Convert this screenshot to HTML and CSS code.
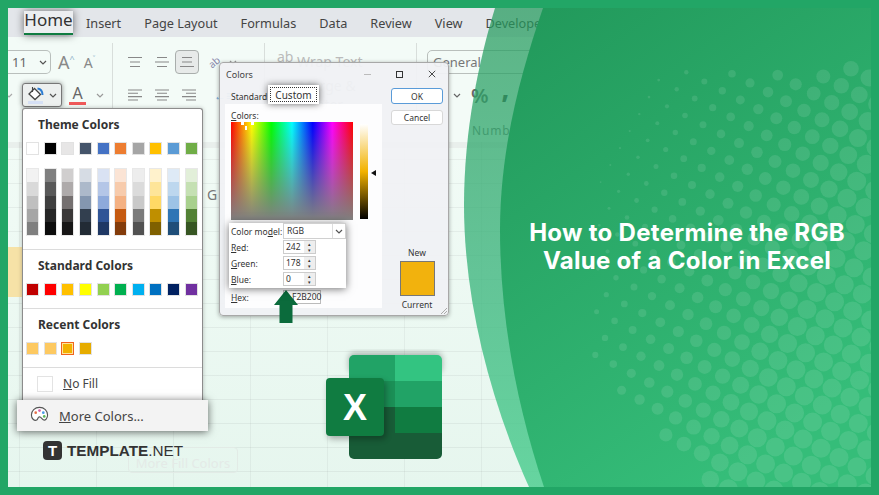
FILE: index.html
```html
<!DOCTYPE html>
<html lang="en">
<head>
<meta charset="UTF-8">
<title>How to Determine the RGB Value of a Color in Excel</title>
<link rel="stylesheet" href="styles.css">
</head>
<body>

<svg class="defs" width="0" height="0">
  <symbol id="lines-a" viewBox="0 0 16 12"><path d="M1 1.5h14M3 6h10M3 10.5h10"/></symbol>
  <symbol id="lines-b" viewBox="0 0 16 12"><path d="M3 1.5h10M1 6h14M3 10.5h10"/></symbol>
  <symbol id="lines-c" viewBox="0 0 16 12"><path d="M3 1.5h10M3 6h10M1 10.5h14"/></symbol>
  <symbol id="lines-l" viewBox="0 0 16 12"><path d="M1 1h14M1 4.3h10M1 7.6h14M1 11h10"/></symbol>
  <symbol id="lines-m" viewBox="0 0 16 12"><path d="M1 1h14M3 4.3h10M1 7.6h14M3 11h10"/></symbol>
  <symbol id="lines-r" viewBox="0 0 16 12"><path d="M1 1h14M5 4.3h10M1 7.6h14M5 11h10"/></symbol>
  <symbol id="chev" viewBox="0 0 8 5"><path d="M1 1l3 3 3-3"/></symbol>
</svg>

<div class="frame">

  <!-- excel window behind everything -->
  <div class="window">
    <nav class="tabs">
      <a class="tab tab-home">Home</a>
      <a class="tab">Insert</a>
      <a class="tab">Page Layout</a>
      <a class="tab">Formulas</a>
      <a class="tab">Data</a>
      <a class="tab">Review</a>
      <a class="tab">View</a>
      <a class="tab">Develope</a>
    </nav>

    <div class="ribbon">
      <div class="group group-font">
        <div class="row">
          <div class="size-box"><span>11</span><svg class="chev"><use href="#chev"/></svg></div>
          <span class="grow-a">A<sup>^</sup></span>
          <span class="shrink-a">A<sup>˅</sup></span>
        </div>
        <div class="row row-fill">
          <svg class="chev chev-stray"><use href="#chev"/></svg>
          <div class="fill-btn">
            <svg class="bucket" viewBox="0 0 18 18">
              <path d="M7.500 2.500L13.500 8.500L8 13.500L2 8z" fill="#fff" stroke="#444" stroke-width="1.300"/>
              <path d="M5.500 1v5" fill="none" stroke="#444" stroke-width="1.100"/>
              <path d="M10.500 2.500c3 .5 5 3 5 6.500" fill="none" stroke="#2b7cd3" stroke-width="2"/>
              <rect x="1" y="15" width="15" height="3" fill="#d6e0f5"/>
            </svg>
            <svg class="chev"><use href="#chev"/></svg>
          </div>
          <span class="font-a">A</span>
          <svg class="chev chev-pale"><use href="#chev"/></svg>
        </div>
      </div>

      <div class="group group-align">
        <div class="row">
          <svg class="lines"><use href="#lines-a"/></svg>
          <svg class="lines"><use href="#lines-b"/></svg>
          <span class="lines-on"><svg class="lines"><use href="#lines-c"/></svg></span>
          <span class="orient">ab</span>
          <svg class="chev chev-pale"><use href="#chev"/></svg>
        </div>
        <div class="row">
          <svg class="lines"><use href="#lines-l"/></svg>
          <svg class="lines"><use href="#lines-m"/></svg>
          <svg class="lines lines-last"><use href="#lines-r"/></svg>
          <span class="indent">←≡</span>
        </div>
        <span class="group-name">Alignment</span>
      </div>

      <div class="group group-wrap">
        <div class="row"><span class="wrap-text"><i>ab</i> Wrap Text</span></div>
        <div class="row"><span class="merge">Merge &amp; Center</span><svg class="chev chev-pale"><use href="#chev"/></svg></div>
      </div>

      <div class="group group-number">
        <div class="row"><div class="general">General</div></div>
        <div class="row">
          <svg class="chev chev-pale"><use href="#chev"/></svg>
          <span class="percent">%</span>
          <span class="comma">,</span>
        </div>
        <span class="group-name">Number</span>
      </div>
    </div>

    <div class="sheet">
      <span class="col-g">G</span>
      <span class="cell-yellow"></span>
    </div>
  </div>

  <button class="fill-more" type="button">More Fill Colors</button>

  <!-- right green panel -->
  <svg class="curve" viewBox="0 0 879 495">
    <defs>
      <linearGradient id="bandFill" x1="0" y1="0" x2="0" y2="1">
        <stop offset="0" stop-color="#22995b" stop-opacity=".72"/>
        <stop offset=".55" stop-color="#3cb57d" stop-opacity=".78"/>
        <stop offset="1" stop-color="#4fcf92" stop-opacity=".85"/>
      </linearGradient>
      <linearGradient id="mainFill" x1="0" y1="0" x2=".55" y2="1">
        <stop offset="0" stop-color="#21985a"/>
        <stop offset="1" stop-color="#35bd79"/>
      </linearGradient>
    </defs>
    <path fill="url(#bandFill)" d="M495 8C479 60 464 130 464 205C464 300 490 400 529 487H560V8Z"/>
    <path fill="url(#mainFill)" d="M543 8C520 75 500 150 500 230C500 320 518 410 544 487H879V8Z"/>
  </svg>
  <svg id="dots" class="dots" viewBox="0 0 879 495"></svg>

  <h1 class="headline">How to Determine the RGB<br>Value of a Color in Excel</h1>

  <!-- fill colour dropdown -->
  <div class="dropdown">
    <section class="dd-section dd-theme">
      <h3>Theme Colors</h3>
      <div class="swatches" id="theme"></div>
      <div class="shades" id="shades"></div>
    </section>
    <section class="dd-section">
      <h3>Standard Colors</h3>
      <div class="swatches" id="standard"></div>
    </section>
    <section class="dd-section">
      <h3>Recent Colors</h3>
      <div class="swatches" id="recent"></div>
    </section>
    <section class="dd-nofill">
      <span class="nofill-box"></span>
      <span><u>N</u>o Fill</span>
    </section>
  </div>

  <div class="more-colors">
    <svg class="palette" viewBox="0 0 20 20">
      <path d="M10 1.500C5 1.500 1.500 5 1.500 9.500c0 4 3 6 5 5.500 2-.5 1.500-3 3-3.500 2-.5 3 2 4.500 3 2 1.300 4.500-1.500 4.500-5C18.500 5 15 1.500 10 1.500z" fill="#fff" stroke="#555" stroke-width="1.200"/>
      <circle cx="6" cy="7" r="1.400" fill="#e8704a"/>
      <circle cx="10" cy="4.800" r="1.400" fill="#d95fa8"/>
      <circle cx="14" cy="7" r="1.400" fill="#4a9be8"/>
      <circle cx="15" cy="11" r="1.400" fill="#5cb85c"/>
    </svg>
    <span><u>M</u>ore Colors...</span>
  </div>

  <!-- colors dialog -->
  <div class="dialog">
    <div class="dlg-title">
      <span>Colors</span>
      <div class="dlg-buttons">
        <i class="btn-min"></i>
        <i class="btn-max"></i>
        <svg class="btn-close" viewBox="0 0 10 10"><path d="M1 1l8 8M9 1l-8 8"/></svg>
      </div>
    </div>
    <div class="dlg-body">
      <div class="dlg-main">
        <div class="dlg-tabs">
          <span class="dlg-tab">Standard</span>
          <span class="dlg-tab-on"><b>Custom</b></span>
        </div>
        <div class="dlg-panel">
          <div class="panel-label"><u>C</u>olors:</div>
          <div class="picker">
            <div class="spectrum"><i class="mark mark-t1"></i><i class="mark mark-t2"></i><i class="mark mark-c"></i></div>
            <div class="lum"></div>
            <div class="lum-arrow"></div>
          </div>
          <div class="form-box">
            <label>Color mo<u>d</u>el:</label>
            <div class="select"><span>RGB</span><em><svg class="chev"><use href="#chev"/></svg></em></div>
            <label><u>R</u>ed:</label>
            <div class="spin"><span>242</span><em>▴<br>▾</em></div>
            <label><u>G</u>reen:</label>
            <div class="spin"><span>178</span><em>▴<br>▾</em></div>
            <label><u>B</u>lue:</label>
            <div class="spin"><span>0</span><em>▴<br>▾</em></div>
          </div>
          <div class="hex-row">
            <label><u>H</u>ex:</label>
            <div class="hex-input">F2B200</div>
          </div>
        </div>
      </div>
      <div class="dlg-side">
        <button class="dlg-btn dlg-ok" type="button">OK</button>
        <button class="dlg-btn" type="button">Cancel</button>
        <span class="side-new">New</span>
        <div class="new-swatch"></div>
        <span class="side-current">Current</span>
      </div>
    </div>
    <svg class="grip" viewBox="0 0 8 8"><path d="M1 7l6-6M4 7l3-3"/></svg>
  </div>

  <svg class="arrow" viewBox="0 0 24 33"><path d="M12 0L24 15H18.500V33H5.500V15H0Z"/></svg>

  <!-- excel logo -->
  <svg class="excel" viewBox="0 0 116 104">
    <defs>
      <clipPath id="sheetClip"><rect x="23" y="0" width="93" height="104" rx="5"/></clipPath>
      <filter id="soft" x="-20%" y="-20%" width="140%" height="140%"><feGaussianBlur stdDeviation="3"/></filter>
    </defs>
    <rect x="23" y="-2" width="93" height="20" rx="5" fill="#000" opacity=".3" filter="url(#soft)"/>
    <g clip-path="url(#sheetClip)">
      <rect x="23" y="0" width="46" height="26" fill="#21a366"/>
      <rect x="69" y="0" width="47" height="26" fill="#33c481"/>
      <rect x="23" y="26" width="46" height="26" fill="#1b8f56"/>
      <rect x="69" y="26" width="47" height="26" fill="#21a366"/>
      <rect x="23" y="52" width="46" height="26" fill="#185c37"/>
      <rect x="69" y="52" width="47" height="26" fill="#107c41"/>
      <rect x="23" y="78" width="93" height="26" fill="#185c37"/>
    </g>
    <rect x="2" y="26" width="58" height="58" rx="4" fill="#000" opacity=".3" filter="url(#soft)"/>
    <rect x="0" y="23" width="58" height="58" rx="4" fill="#107c41"/>
    <text class="excel-x" x="29" y="65" text-anchor="middle">X</text>
  </svg>

  <!-- template.net logo -->
  <div class="brand">
    <span class="brand-mark">T</span>
    <span class="brand-name"><b>TEMPLATE</b>.NET</span>
  </div>
</div>

<script src="page.js"></script>
</body>
</html>
```

FILE: styles.css
```css
* {
  box-sizing: border-box;
}

body {
  margin: 0;
  font-family: "Noto Sans", "Open Sans", sans-serif;
  color: #333;
  overflow: hidden;
}

.defs {
  position: absolute;
}

.frame {
  position: relative;
  width: 879px;
  height: 495px;
  border: 8px solid #22a666;
  overflow: hidden;
  background: linear-gradient(#f6fdf9, #e6f6ee);
}

/* the svg canvases are laid over the whole picture, so undo the border */
.curve, .dots {
  position: absolute;
  left: -8px;
  top: -8px;
  width: 879px;
  height: 495px;
}

.window {
  display: flex;
  flex-direction: column;
  height: 100%;
}

/* tabs */
.tabs {
  display: flex;
  align-items: center;
  gap: 23px;
  height: 29px;
  padding-left: 78px;
  background: #e3e6ea;
  font-size: 12.7px;
  color: #444;
}

.tab-home {
  position: absolute;
  left: 16px;
  top: 3px;
  width: 49px;
  height: 24px;
  background: #eceef0;
  box-shadow: 0 0 8px rgba(0,0,0,.55);
  border-bottom: 2px solid #107c41;
  font-size: 17px;
  line-height: 18px;
  text-align: center;
  color: #333;
}

/* ribbon */
.ribbon {
  display: flex;
  height: 105px;
  background: #f3fbf7;
}

.group {
  position: relative;
  display: flex;
  flex-direction: column;
  gap: 9px;
  padding-top: 7px;
  border-right: 1px solid #d8dedb;
  margin: 6px 0 30px;
}

.group-font { width: 105px; }
.group-align { width: 152px; padding-left: 14px; }
.group-wrap { width: 152px; padding-left: 12px; }
.group-number { flex: 1; border-right: none; padding-left: 10px; }

.row {
  display: flex;
  align-items: center;
  height: 24px;
}

.chev {
  width: 8px;
  height: 5px;
  fill: none;
  stroke: #555;
  stroke-width: 1.2;
  flex: none;
}

.chev-pale {
  stroke: #999;
}

.size-box {
  display: flex;
  align-items: center;
  justify-content: space-between;
  width: 43px;
  height: 24px;
  padding: 0 3px 0 4px;
  border: 1px solid #b9bfbc;
  border-left: none;
  border-radius: 0 5px 5px 0;
  font-size: 13px;
  color: #666;
}

.grow-a, .shrink-a, .font-a {
  color: #888;
}

.grow-a { margin-left: 7px; font-size: 18px; }
.shrink-a { margin-left: 9px; font-size: 14px; }
.grow-a sup, .shrink-a sup { font-size: 9px; color: #8ab0c8; }

.row-fill {
  position: relative;
  padding-left: 14px;
}

.chev-stray {
  position: absolute;
  left: -3px;
  top: 10px;
  stroke: #aaa;
}

.fill-btn {
  display: flex;
  align-items: center;
  justify-content: space-between;
  width: 40px;
  height: 24px;
  padding: 0 4px;
  background: #edf0ef;
  border: 1px solid #777;
  border-radius: 3px;
  box-shadow: 0 0 5px rgba(0,0,0,.45);
}

.bucket {
  width: 18px;
  height: 18px;
}

.font-a {
  width: 17px;
  margin-left: 7px;
  border-bottom: 3px solid #ef5a5a;
  font-size: 16px;
  line-height: 17px;
  text-align: center;
  color: #666;
}

.row-fill .chev-pale {
  margin-left: 10px;
}

.lines {
  width: 16px;
  height: 12px;
  margin-right: 11px;
  fill: none;
  stroke: #888;
  stroke-width: 1.1;
}

.lines-last {
  margin-right: 17px;
}

.lines-on {
  display: flex;
  align-items: center;
  justify-content: center;
  width: 24px;
  height: 24px;
  margin-left: -6px;
  background: #e7eae9;
  border: 1px solid #a9aeac;
  border-radius: 4px;
}

.lines-on .lines {
  margin: 0;
}

.orient {
  margin-left: 9px;
  font-size: 10px;
  color: #88a;
  transform: rotate(-40deg);
}

.lines-on + .orient + .chev {
  margin-left: 9px;
}

.indent {
  font-size: 12px;
  color: #6aa6d8;
}

.group-name {
  position: absolute;
  left: 126px;
  top: 79px;
  font-size: 11px;
  color: #cfd5d2;
}

.group-number .group-name {
  left: 55px;
  letter-spacing: .8px;
  color: #777;
  font-size: 12px;
}

.wrap-text {
  margin-top: -2px;
  font-size: 14px;
  color: #bbb;
}

.wrap-text i {
  font-style: normal;
  position: relative;
  top: -5px;
}

.merge {
  margin-left: 22px;
  margin-right: 12px;
  font-size: 14px;
  color: #bbb;
}

.general {
  width: 130px;
  height: 24px;
  padding-left: 5px;
  border: 1px solid #b9bfbc;
  border-radius: 5px;
  font-size: 13px;
  line-height: 23px;
  color: #777;
}

.group-number .row .chev-pale {
  margin-left: 26px;
  stroke: #666;
}

.percent {
  margin-left: 10px;
  font-size: 20px;
  font-weight: 600;
  color: #666;
}

.comma {
  margin: -14px 0 0 13px;
  font-size: 26px;
  font-weight: 800;
  color: #444;
}

/* sheet */
.sheet {
  position: relative;
  flex: 1;
  background:
    linear-gradient(rgba(0,0,0,.05) 1px, transparent 1px) 0 17px / 100% 24px,
    linear-gradient(90deg, rgba(0,0,0,.045) 1px, transparent 1px) 11px 0 / 77px 100%,
    linear-gradient(#e9efec 6px, transparent 6px);
}

.col-g {
  position: absolute;
  left: 199px;
  top: 43px;
  font-size: 14px;
  color: #777;
}

.cell-yellow {
  position: absolute;
  left: 0;
  top: 105px;
  width: 14px;
  height: 50px;
  background: #f6e2a7;
}

.fill-more {
  position: absolute;
  left: 120px;
  top: 439px;
  width: 110px;
  height: 26px;
  padding-top: 6px;
  background: none;
  border: 1px solid #e2ebe6;
  border-radius: 4px;
  font: 13px "Noto Sans", sans-serif;
  color: #e4eae7;
}

/* right side */
.dots circle {
  fill: #fff;
  fill-opacity: .1;
}

.headline {
  position: absolute;
  left: 499px;
  top: 211px;
  width: 360px;
  margin: 0;
  font: 700 24px/28px Inter, "Open Sans", sans-serif;
  letter-spacing: .3px;
  color: #fff;
  text-align: center;
}

/* dropdown */
.dropdown {
  position: absolute;
  left: 14px;
  top: 100px;
  width: 181px;
  height: 300px;
  background: #fff;
  border: 1px solid #8c8c8c;
  border-bottom: none;
  border-radius: 3px 3px 0 0;
  box-shadow: 0 0 4px rgba(0,0,0,.25);
}

.dd-section {
  padding: 8px 3px 12px;
  border-bottom: 1px solid #dcdcdc;
}

.dd-theme {
  padding-top: 8px;
  padding-bottom: 13px;
}

.dd-section h3 {
  margin: 0 0 9px 12px;
  font-size: 12px;
  line-height: 16px;
  font-weight: 700;
  color: #333;
}

.swatches, .shades {
  display: grid;
  grid-template-columns: repeat(10, 13px);
  column-gap: 4.65px;
}

.swatch {
  height: 13px;
  border: 1px solid #e2e2e2;
}

.swatch-on {
  border: 1px solid #f0641e;
  box-shadow: inset 0 0 0 1px #ffe39a;
}

.shades {
  margin-top: 13px;
}

.shade-col {
  border: 1px solid #e8e8e8;
}

.shade-col i {
  display: block;
  height: 13.3px;
}

.dd-nofill {
  display: flex;
  align-items: center;
  gap: 10px;
  padding: 7px 0 0 14px;
  font-size: 12px;
  color: #444;
}

.nofill-box {
  width: 16px;
  height: 16px;
  border: 1px solid #e3e3e3;
}

.more-colors {
  position: absolute;
  left: 9px;
  top: 392px;
  display: flex;
  align-items: center;
  gap: 10px;
  width: 191px;
  height: 31px;
  padding-left: 13px;
  background: #f3f3f3;
  box-shadow: 0 1px 8px rgba(0,0,0,.6);
  font-size: 13px;
  color: #444;
}

.palette {
  width: 19px;
  height: 19px;
}

/* colors dialog */
.dialog {
  position: absolute;
  left: 211px;
  top: 54px;
  width: 230px;
  height: 254px;
  background: rgba(240,241,244,.94);
  border: 1px solid #a8a8a8;
  border-radius: 4px;
  box-shadow: 0 1px 4px rgba(0,0,0,.35);
  font-size: 8.5px;
  color: #333;
}

.dlg-title {
  display: flex;
  align-items: center;
  justify-content: space-between;
  height: 22px;
  padding: 0 12px 0 6px;
  font-size: 9px;
  color: #444;
}

.dlg-buttons {
  display: flex;
  align-items: center;
  gap: 25px;
}

.btn-min {
  width: 7px;
  border-top: 1px solid #bbb;
}

.btn-max {
  width: 7px;
  height: 7px;
  border: 1px solid #333;
}

.btn-close {
  width: 8px;
  height: 8px;
  fill: none;
  stroke: #333;
  stroke-width: 1.1;
}

.dlg-body {
  display: flex;
  gap: 9px;
  padding-left: 5px;
}

.dlg-main {
  width: 157px;
}

.dlg-tabs {
  display: flex;
  align-items: flex-end;
  height: 19px;
}

.dlg-tab {
  width: 43px;
  padding-left: 6px;
  font-size: 8.5px;
  line-height: 14px;
  white-space: nowrap;
}

.dlg-tab-on {
  position: relative;
  z-index: 1;
  width: 51px;
  height: 19px;
  padding: 2px;
  background: #fff;
  box-shadow: 0 0 7px rgba(0,0,0,.6);
}

.dlg-tab-on b {
  display: block;
  height: 15px;
  border: 1px dotted #333;
  font-size: 10px;
  font-weight: 400;
  line-height: 14px;
  text-align: center;
}

.dlg-panel {
  height: 204px;
  padding: 6px 0 0 6px;
  background: rgba(255,255,255,.85);
}

.panel-label {
  line-height: 11px;
}

.picker {
  display: flex;
  margin-top: 1px;
}

.spectrum {
  position: relative;
  width: 122px;
  height: 98px;
  background:
    linear-gradient(rgba(128,128,128,0), #808080),
    linear-gradient(90deg, #f00, #ff0 17%, #0f0 33%, #0ff 50%, #00f 67%, #f0f 83%, #f00);
}

.mark {
  position: absolute;
  width: 3px;
  height: 3px;
  background: #fff;
}

.mark-t1 { left: 10px; top: 0; }
.mark-t2 { left: 20px; top: 0; }
.mark-c { left: 14px; top: 4px; height: 4px; width: 2px; }

.lum {
  width: 8px;
  height: 95px;
  margin: 2px 0 0 7px;
  background: linear-gradient(#fff, #f2b200 50%, #000);
}

.lum-arrow {
  width: 0;
  height: 0;
  margin: 48px 0 0 3px;
  border: 3px solid transparent;
  border-right: 5px solid #111;
  border-left: none;
}

.form-box {
  position: relative;
  z-index: 1;
  display: grid;
  grid-template-columns: 52px 1fr;
  grid-template-rows: 16px repeat(3, 16px);
  align-items: center;
  width: 117px;
  height: 65px;
  margin: 3px 0 0 -2px;
  padding-left: 2px;
  background: #fff;
  box-shadow: 0 1px 8px rgba(0,0,0,.55);
}

.select {
  display: flex;
  justify-content: space-between;
  height: 16px;
  padding-left: 3px;
  border: 1px solid #d0d0d0;
  line-height: 14px;
}

.select em {
  display: flex;
  align-items: center;
  padding: 0 2px;
  border-left: 1px solid #ddd;
}

.spin {
  display: flex;
  justify-content: space-between;
  width: 33px;
  height: 14px;
  padding-left: 2px;
  border: 1px solid #ccc;
  line-height: 12px;
}

.spin em {
  width: 11px;
  background: #eee;
  font-size: 5px;
  font-style: normal;
  line-height: 6px;
  text-align: center;
}

.hex-row {
  display: grid;
  grid-template-columns: 52px 38px;
  align-items: center;
  margin-top: 2px;
}

.hex-input {
  height: 14px;
  padding-left: 8px;
  background: #fff;
  border: 1px solid #bbb;
  line-height: 12px;
}

.dlg-side {
  display: flex;
  flex-direction: column;
  align-items: center;
  width: 52px;
  padding-top: 3px;
}

.dlg-btn {
  width: 52px;
  height: 15px;
  margin-bottom: 6px;
  padding: 0;
  background: #fff;
  border: 1px solid #d8d8d8;
  border-radius: 3px;
  font: 8.5px "Noto Sans", sans-serif;
  color: #333;
}

.dlg-ok {
  height: 16px;
  border: 1px solid #5a9bd8;
}

.side-new {
  margin-top: 116px;
  line-height: 11px;
}

.new-swatch {
  width: 35px;
  height: 35px;
  margin: 3px 0;
  background: #f2b20d;
  border: 1px solid #777;
}

.side-current {
  line-height: 11px;
}

.grip {
  position: absolute;
  right: 0;
  bottom: 0;
  width: 8px;
  height: 8px;
  fill: none;
  stroke: #aaa;
}

.arrow {
  position: absolute;
  left: 266px;
  top: 282px;
  width: 24px;
  height: 33px;
  fill: #0b6b3c;
}

/* logos */
.excel {
  position: absolute;
  left: 318px;
  top: 347px;
  width: 116px;
  height: 104px;
  overflow: visible;
}

.excel-x {
  font: 700 36px "Liberation Sans", sans-serif;
  fill: #fff;
}

.brand {
  position: absolute;
  left: 35px;
  top: 433px;
  display: flex;
  align-items: center;
  gap: 5px;
}

.brand-mark {
  width: 19px;
  height: 19px;
  background: #333;
  border-radius: 4px;
  font: 700 15px/19px "Liberation Sans", sans-serif;
  color: #fff;
  text-align: center;
}

.brand-name {
  font: 400 15.3px "Liberation Sans", sans-serif;
  color: #333;
}

.brand-name b {
  font-weight: 700;
}
```

FILE: page.js
```js
// palette data, taken from the excel fill menu
const theme = ['#fff', '#000', '#e7e6e6', '#44546a', '#4472c4', '#ed7d31', '#a5a5a5', '#ffc000', '#5b9bd5', '#70ad47'];
const standard = ['#c00000', '#f00', '#ffc000', '#ff0', '#92d050', '#00b050', '#00b0f0', '#0070c0', '#002060', '#7030a0'];
const recent = ['#fdc961', '#fdc961', '#f2b200', '#e6ac00'];
const shades = [
  ['#f2f2f2', '#d9d9d9', '#bfbfbf', '#a6a6a6', '#7f7f7f'],
  ['#7f7f7f', '#595959', '#3f3f3f', '#262626', '#0d0d0d'],
  ['#d0cece', '#aeaaaa', '#757070', '#3a3838', '#171616'],
  ['#d6dce4', '#acb9ca', '#8497b0', '#323f4f', '#222b35'],
  ['#d9e2f3', '#b4c6e7', '#8eaadb', '#2f5496', '#1f3864'],
  ['#fbe4d5', '#f7cbac', '#f4b183', '#c55a11', '#833c0b'],
  ['#ededed', '#dbdbdb', '#c9c9c9', '#7b7b7b', '#525252'],
  ['#fff2cc', '#fee599', '#ffd965', '#bf8f00', '#7f6000'],
  ['#deeaf6', '#bdd7ee', '#9dc3e6', '#2e75b5', '#1f4e79'],
  ['#e2efd9', '#c5e0b3', '#a8d08d', '#538135', '#375623']
];

function addSwatches(id, colors, selected) {
  const box = document.getElementById(id);
  colors.forEach((c, i) => {
    const s = document.createElement('span');
    s.className = i === selected ? 'swatch swatch-on' : 'swatch';
    s.style.background = c;
    box.appendChild(s);
  });
}

addSwatches('theme', theme);
addSwatches('standard', standard);
addSwatches('recent', recent, 2);

const shadeBox = document.getElementById('shades');
shades.forEach(col => {
  const c = document.createElement('div');
  c.className = 'shade-col';
  col.forEach(color => {
    const cell = document.createElement('i');
    cell.style.background = color;
    c.appendChild(cell);
  });
  shadeBox.appendChild(c);
});

// halftone dots on the green panel, a tilted square lattice
const svg = document.getElementById('dots');
const NS = 'http://www.w3.org/2000/svg';
for (let i = -40; i <= 40; i++) {
  for (let j = -40; j <= 40; j++) {
    const x = 750.3 + i * 18 + j * 9.67;
    const y = 368.3 + i * 9.2 - j * 17;
    if (x < 590 || x > 890 || y < 68 || y > 500) continue;
    // bottom left of the pattern is cut along a diagonal
    if (y - 370 > x - 600) continue;
    const r = Math.min(9.5, 0.034 * (x - 615) + 0.014 * (y - 85));
    if (r < 0.8) continue;
    const dot = document.createElementNS(NS, 'circle');
    dot.setAttribute('cx', x.toFixed(1));
    dot.setAttribute('cy', y.toFixed(1));
    dot.setAttribute('r', r.toFixed(1));
    svg.appendChild(dot);
  }
}
```
